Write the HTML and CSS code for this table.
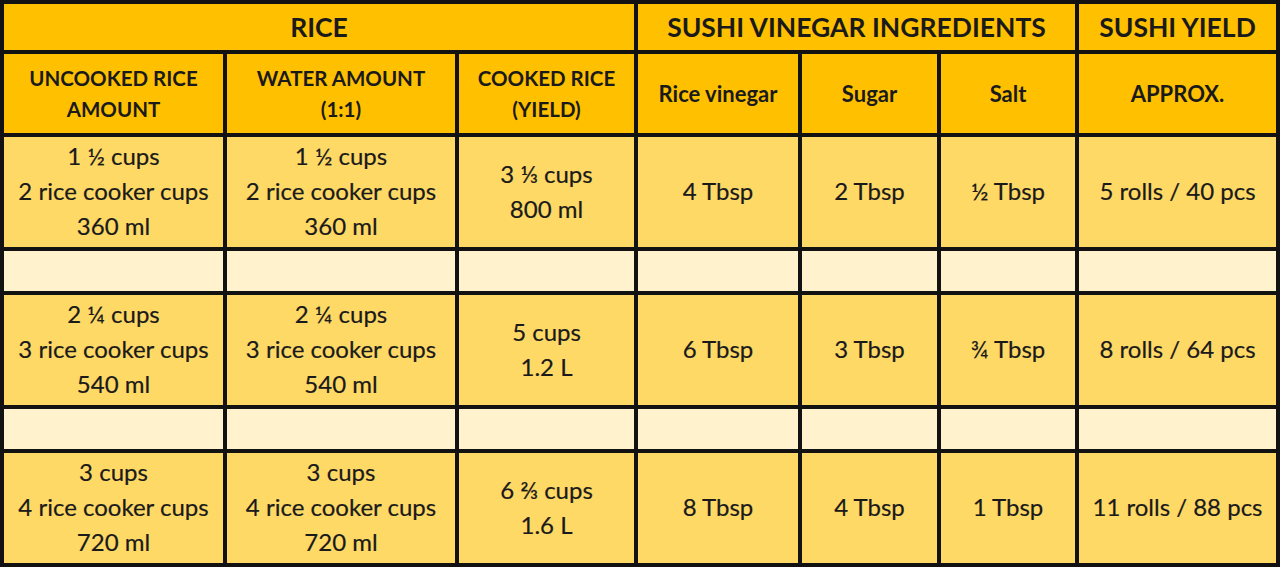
FILE: index.html
```html
<!DOCTYPE html>
<html lang="en">
<head>
<meta charset="utf-8">
<title>Sushi rice chart</title>
<link rel="stylesheet" href="styles.css">
</head>
<body>
<div class="chart">
  <div class="cell title span3">RICE</div>
  <div class="cell title span3">SUSHI VINEGAR INGREDIENTS</div>
  <div class="cell title">SUSHI YIELD</div>

  <div class="cell head">UNCOOKED RICE<br>AMOUNT</div>
  <div class="cell head">WATER AMOUNT<br>(1:1)</div>
  <div class="cell head">COOKED RICE<br>(YIELD)</div>
  <div class="cell head single">Rice vinegar</div>
  <div class="cell head single">Sugar</div>
  <div class="cell head single">Salt</div>
  <div class="cell head single">APPROX.</div>

  <div class="cell data">1 ½ cups<br>2 rice cooker cups<br>360 ml</div>
  <div class="cell data">1 ½ cups<br>2 rice cooker cups<br>360 ml</div>
  <div class="cell data">3 ⅓ cups<br>800 ml</div>
  <div class="cell data">4 Tbsp</div>
  <div class="cell data">2 Tbsp</div>
  <div class="cell data">½ Tbsp</div>
  <div class="cell data">5 rolls / 40 pcs</div>

  <div class="cell gap"></div><div class="cell gap"></div><div class="cell gap"></div><div class="cell gap"></div><div class="cell gap"></div><div class="cell gap"></div><div class="cell gap"></div>

  <div class="cell data">2 ¼ cups<br>3 rice cooker cups<br>540 ml</div>
  <div class="cell data">2 ¼ cups<br>3 rice cooker cups<br>540 ml</div>
  <div class="cell data">5 cups<br>1.2 L</div>
  <div class="cell data">6 Tbsp</div>
  <div class="cell data">3 Tbsp</div>
  <div class="cell data">¾ Tbsp</div>
  <div class="cell data">8 rolls / 64 pcs</div>

  <div class="cell gap"></div><div class="cell gap"></div><div class="cell gap"></div><div class="cell gap"></div><div class="cell gap"></div><div class="cell gap"></div><div class="cell gap"></div>

  <div class="cell data">3 cups<br>4 rice cooker cups<br>720 ml</div>
  <div class="cell data">3 cups<br>4 rice cooker cups<br>720 ml</div>
  <div class="cell data">6 ⅔ cups<br>1.6 L</div>
  <div class="cell data">8 Tbsp</div>
  <div class="cell data">4 Tbsp</div>
  <div class="cell data">1 Tbsp</div>
  <div class="cell data">11 rolls / 88 pcs</div>
</div>
</body>
</html>
```

FILE: styles.css
```css
html, body {
  margin: 0;
  padding: 0;
  background: #111;
}

.chart {
  width: 1280px;
  height: 567px;
  box-sizing: border-box;
  padding: 4px;
  background: #121212;
  display: grid;
  grid-template-columns: 219px 228px 175px 160px 135px 134px 197px;
  grid-template-rows: 46px 79px 110px 40px 110px 40px 110px;
  gap: 4px;
  font-family: Lato, "Open Sans", sans-serif;
  color: #1a1a1a;
}

.cell {
  display: flex;
  align-items: center;
  justify-content: center;
  text-align: center;
}

.span3 {
  grid-column: span 3;
}

.title {
  background: #ffc000;
  font-weight: 700;
  font-size: 26.5px;
}

.head {
  background: #ffc000;
  font-weight: 700;
  font-size: 20.5px;
  line-height: 31px;
}

.head.single {
  font-size: 22px;
}

.data {
  background: #ffd966;
  font-size: 24px;
  line-height: 35px;
  padding-bottom: 3px;
  -webkit-text-stroke: 0.2px #1a1a1a;
}

.gap {
  background: #fff2cc;
}
```
